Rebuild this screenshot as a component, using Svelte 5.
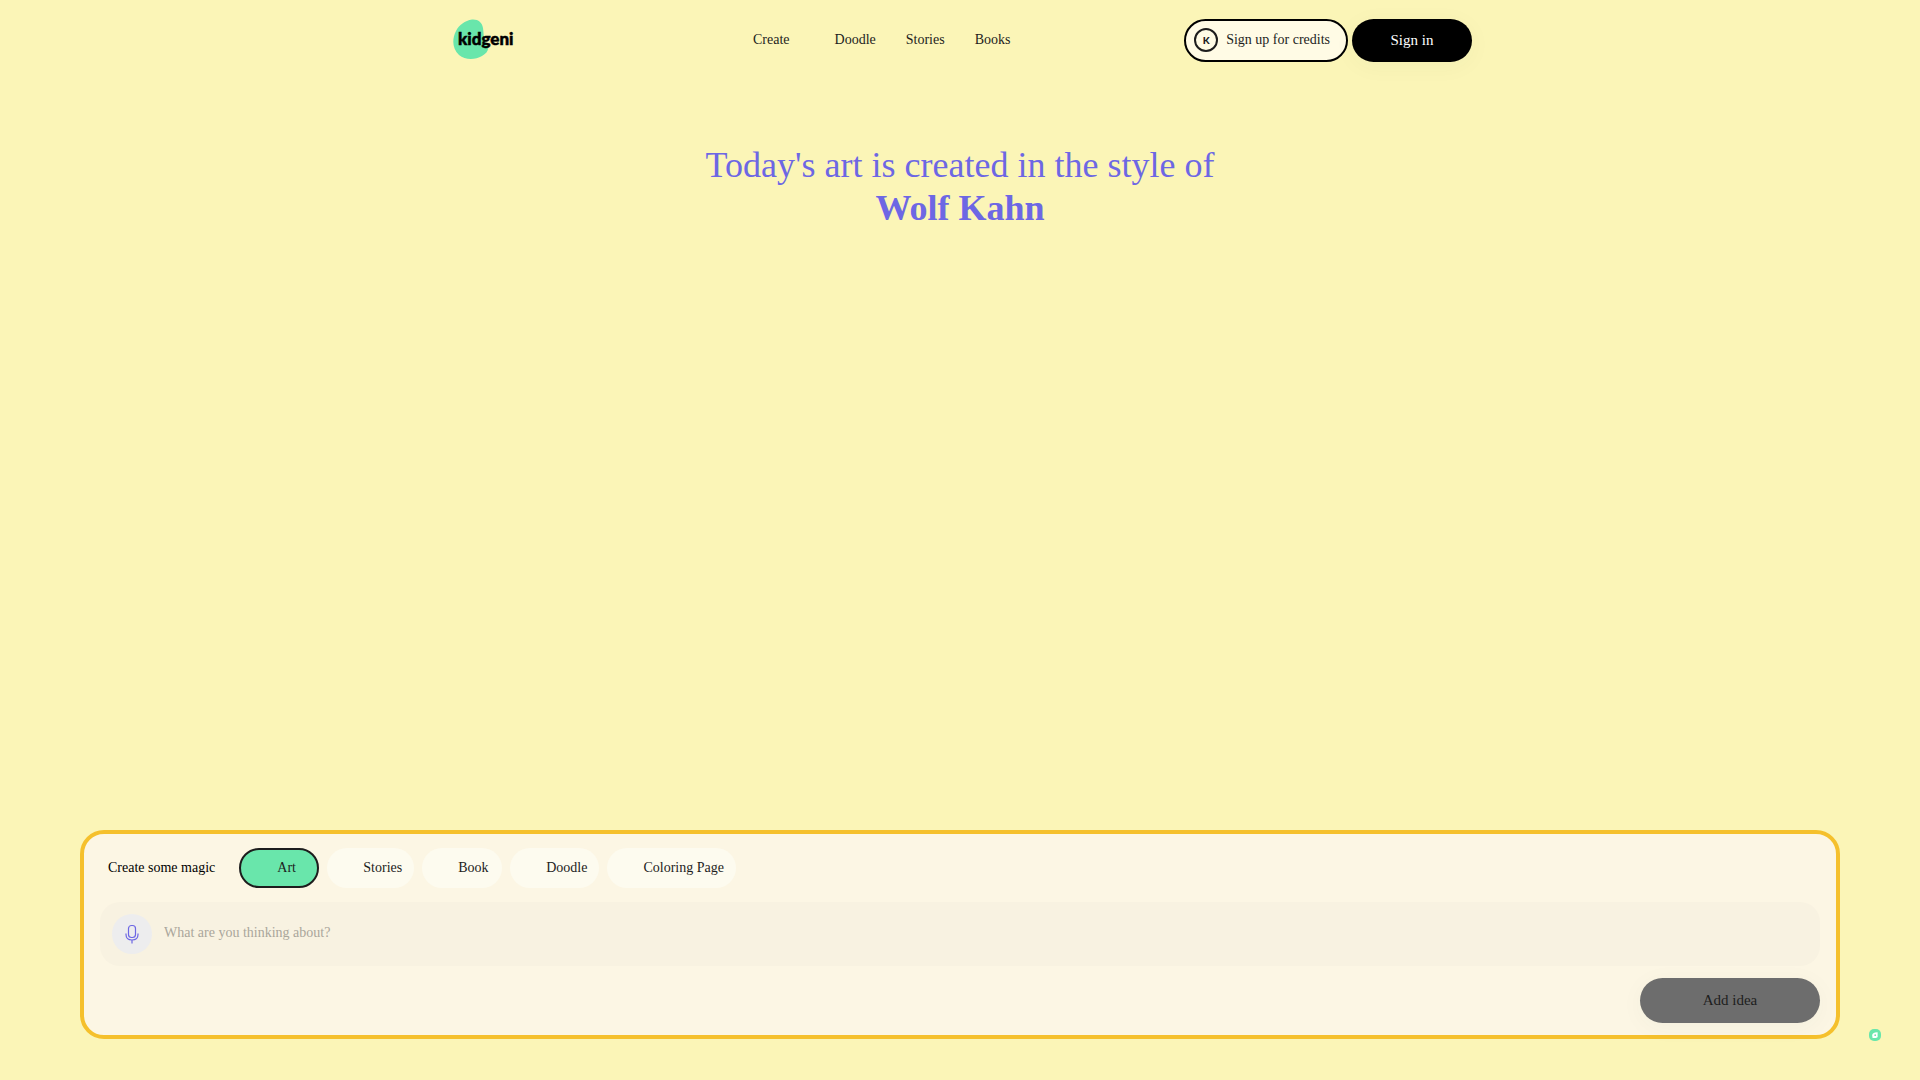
<script>
  const links = [
    { label: "Create", menu: true },
    { label: "Doodle" },
    { label: "Stories" },
    { label: "Books" }
  ];
  const tabs = ["Art", "Stories", "Book", "Doodle", "Coloring Page"];

  let active = $state("Art");
  let idea = $state("");
</script>

<svelte:head>
  <title>kidgeni</title>
</svelte:head>

<div class="page">
  <header>
    <a class="logo" href="/">
      <svg width="66" height="44" viewBox="0 0 66 44" role="img" aria-label="kidgeni">
        <path
          d="M19 1.5C25 1 29 4 30 10C31 17 30 20 34 26C37 31 34 35 29 38C22 42 12 42 6 37C-1 30 -1 21 3 13C6 7 12 2.5 19 1.5Z"
          fill="#69e6ab" />
        <text x="5" y="27">kidgeni</text>
      </svg>
    </a>
    <nav>
      {#each links as link}
        <a class:menu={link.menu} href="/{link.label.toLowerCase()}">{link.label}</a>
      {/each}
    </nav>
    <div class="actions">
      <button type="button" class="credits">
        <span class="coin">K</span>
        Sign up for credits
      </button>
      <button type="button" class="primary sign-in">Sign in</button>
    </div>
  </header>

  <main>
    <h1>Today's art is created in the style of<br /><b>Wolf Kahn</b></h1>

    <form class="panel" onsubmit={e => e.preventDefault()}>
      <div class="tabs">
        <span class="title">Create some magic</span>
        {#each tabs as tab}
          <button
            type="button"
            class="tab"
            class:active={active === tab}
            onclick={() => (active = tab)}>{tab}</button>
        {/each}
      </div>
      <div class="field">
        <button type="button" class="mic" aria-label="Speak your idea">
          <svg width="14" height="20" viewBox="0 0 14 20" fill="none" stroke="#6d67e4" stroke-width="1.2">
            <rect x="3.5" y="1.5" width="7" height="12" rx="3" />
            <path d="M1 9.5V10.5C1 14 3.6 16 7 16S13 14 13 10.5V9.5M7 16V19.5" />
          </svg>
        </button>
        <input
          type="text"
          aria-label="Your idea"
          placeholder="What are you thinking about?"
          bind:value={idea} />
      </div>
      <button type="submit" class="primary add" disabled={!idea}>Add idea</button>
    </form>
  </main>

  <button type="button" class="helper" aria-label="Help">
    <svg width="12" height="12" viewBox="0 0 12 12">
      <rect width="12" height="12" rx="5" fill="#69e6ab" />
      <path d="M3.2 6.5C3.2 4.8 4.4 4 6 3.6L8.6 3.2V8C8 8.8 7 9 6 9H3.6Z" fill="#fff" />
      <circle cx="6.2" cy="6.2" r="0.9" fill="#69e6ab" />
    </svg>
  </button>
</div>

<style>
  :global(body) {
    margin: 0;
    background: #fbf5b7;
  }
  .page {
    display: flex;
    flex-direction: column;
    box-sizing: border-box;
    min-height: 100vh;
    font-family: "Liberation Serif", "Times New Roman", serif;
    font-size: 14px;
    line-height: 20px;
    color: #1d1d1d;
  }
  button,
  input {
    font: inherit;
    color: inherit;
    box-sizing: border-box;
    border: 0;
    padding: 0;
  }
  button {
    cursor: pointer;
  }
  header {
    display: flex;
    align-items: center;
    box-sizing: border-box;
    width: 100%;
    max-width: 1024px;
    height: 80px;
    margin: 0 auto;
  }
  .logo {
    display: flex;
    padding-left: 5px;
  }
  .logo text {
    font-family: Lato, sans-serif;
    font-size: 17px;
    font-weight: 900;
    fill: #000;
    stroke: #000;
    stroke-width: 0.5;
  }
  nav {
    display: flex;
    gap: 30px;
    margin-left: 234px;
  }
  nav a {
    color: inherit;
    text-decoration: none;
  }
  nav .menu {
    margin-right: 15px;
  }
  .actions {
    display: flex;
    gap: 4px;
    margin-left: auto;
  }
  .credits {
    display: flex;
    align-items: center;
    gap: 8px;
    height: 43px;
    padding: 0 16px 0 8px;
    border: 2px solid #000;
    border-radius: 24px;
    background: #fffbe5;
  }
  .coin {
    display: flex;
    align-items: center;
    justify-content: center;
    box-sizing: border-box;
    width: 24px;
    height: 24px;
    border: 2px solid #1d1d1d;
    border-radius: 50%;
    font-family: Lato, sans-serif;
    font-size: 10px;
    font-weight: 900;
  }
  .primary {
    border-radius: 24px;
    background: #000;
    color: #fff;
    font-size: 15px;
    box-shadow: 0 4px 24px rgba(0, 80, 80, 0.04);
  }
  .sign-in {
    width: 120px;
    height: 43px;
  }
  main {
    display: flex;
    flex: 1;
    flex-direction: column;
    justify-content: space-between;
  }
  h1 {
    margin: 64px 0 0;
    font-size: 36px;
    font-weight: 400;
    line-height: 43px;
    text-align: center;
    color: #6d67e4;
  }
  .panel {
    display: flex;
    flex-direction: column;
    margin: 40px 80px 41px;
    padding: 14px 16px 12px;
    border: 4px solid #f5c02c;
    border-radius: 24px;
    background: #fcf6e4;
  }
  .tabs {
    display: flex;
    flex-wrap: wrap;
    align-items: center;
    gap: 8px;
    margin-bottom: 14px;
  }
  .title {
    margin: 0 16px 0 8px;
    color: #000;
  }
  .tab {
    min-width: 80px;
    height: 40px;
    padding: 0 12px 0 36px;
    border-radius: 20px;
    background: #fdfbef;
    text-align: left;
  }
  .tab.active {
    border: 2px solid #1d1d1d;
    background: #69e6ab;
  }
  .field {
    display: flex;
    align-items: center;
    height: 64px;
    padding: 0 12px;
    margin-bottom: 12px;
    border-radius: 20px;
    background: #f8f2e1;
  }
  .mic {
    display: flex;
    align-items: center;
    justify-content: center;
    flex: none;
    width: 40px;
    height: 40px;
    border-radius: 50%;
    background: #ededee;
  }
  .field input {
    flex: 1;
    height: 40px;
    margin-left: 12px;
    padding-bottom: 2px;
    outline: none;
    background: none;
  }
  .field input::placeholder {
    color: #aaa69b;
    opacity: 1;
  }
  .add {
    align-self: flex-end;
    width: 180px;
    height: 45px;
    padding-bottom: 2px;
  }
  .add:disabled {
    background: #6d6d6d;
    color: #1d1d1d;
    cursor: default;
  }
  .helper {
    position: fixed;
    right: 39px;
    bottom: 39px;
    display: flex;
    background: none;
  }
</style>
